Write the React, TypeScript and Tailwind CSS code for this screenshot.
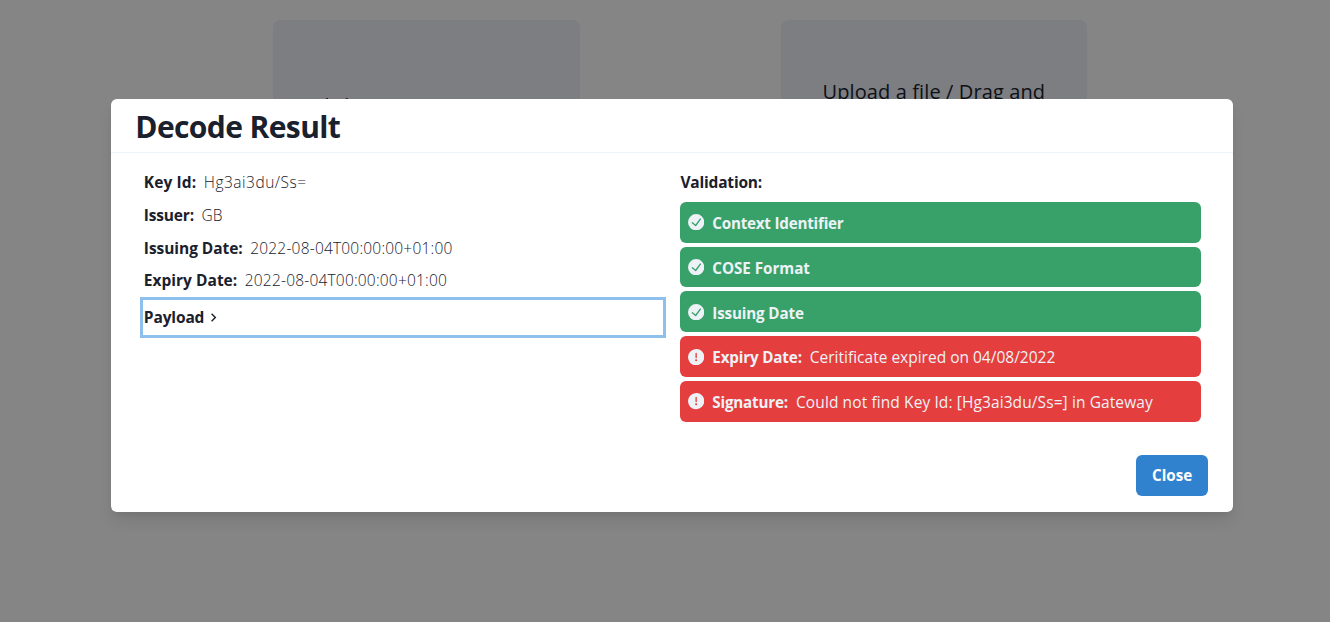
import type { ReactNode } from "react";

function CheckCircle() {
  return (
    <svg viewBox="0 0 24 24" className="size-[16.3px] shrink-0 fill-current">
      <path d="M12,0A12,12,0,1,0,24,12,12.014,12.014,0,0,0,12,0Zm6.927,8.2-6.845,9.289a1.011,1.011,0,0,1-1.43.188L5.764,13.769a1,1,0,1,1,1.25-1.562l4.076,3.261,6.227-8.451A1,1,0,1,1,18.927,8.2Z" />
    </svg>
  );
}

function WarningCircle() {
  return (
    <svg viewBox="0 0 24 24" className="size-[16.3px] shrink-0 fill-current">
      <path d="M11.983,0a12.206,12.206,0,0,0-8.51,3.653A11.8,11.8,0,0,0,0,12.207,11.779,11.779,0,0,0,11.8,24h.214A12.111,12.111,0,0,0,24,11.791h0A11.766,11.766,0,0,0,11.983,0ZM10.5,16.542a1.476,1.476,0,0,1,1.449-1.53h.027a1.527,1.527,0,0,1,1.523,1.47,1.475,1.475,0,0,1-1.449,1.53h-.027A1.529,1.529,0,0,1,10.5,16.542ZM11,12.5v-6a1,1,0,0,1,2,0v6a1,1,0,1,1-2,0Z" />
    </svg>
  );
}

function Field({ label, value, labelClass, valueClass }: { label: string; value: string; labelClass: string; valueClass: string }) {
  return (
    <div className="flex h-[32.7px] items-center gap-[7.5px] pl-[0.8px] leading-6">
      <span className={`font-bold ${labelClass}`}>{label}</span>
      <span className={`font-light ${valueClass}`}>{value}</span>
    </div>
  );
}

function Check({ ok, children }: { ok: boolean; children: ReactNode }) {
  return (
    <div className={`flex h-[40.8px] items-center gap-2 rounded-md px-[7.5px] leading-6 text-[#edf2f7] ${ok ? "bg-[#38a169]" : "bg-[#e53e3e]"}`}>
      {ok ? <CheckCircle /> : <WarningCircle />}
      <div className="flex gap-2 pt-[1.5px]">{children}</div>
    </div>
  );
}

export default function App() {
  return (
    <div className="relative h-[622px] w-[1330px] overflow-hidden bg-[#858585] font-['Open_Sans',sans-serif] text-[15.5px] text-[#1a202c]">
      <div className="flex gap-[201px] pl-[273px] pt-5 text-xl text-[#0d1016]">
        <div className="h-[300px] w-[307px] rounded-lg bg-[#7d7e82] pl-[39px] pt-[72px]">Click</div>
        <div className="h-[300px] w-[306px] rounded-lg bg-[#7d7e82] pl-[41.5px] pt-[58px] tracking-[0.11px]">
          Upload a file / Drag and
        </div>
      </div>

      <div className="absolute inset-0 pl-[111px] pt-[99px]">
        <section className="flex h-[413px] w-[1122px] flex-col rounded-md bg-white shadow-[0_10px_15px_-3px_rgba(0,0,0,0.1),0_4px_6px_-2px_rgba(0,0,0,0.05)]">
          <header className="h-[54px] border-b border-[#edf5fa] pl-[24.3px] pt-[5px] text-[30px] font-bold leading-[46px] tracking-[-0.6px]">
            Decode Result
          </header>
          <div className="flex grow pl-8 pr-[32.3px]">
            <div className="w-[520.4px] pt-[13px]">
              <Field label="Key Id:" value="Hg3ai3du/Ss=" labelClass="tracking-[0.12px]" valueClass="tracking-[0.5px]" />
              <Field label="Issuer:" value="GB" labelClass="tracking-[-0.18px]" valueClass="tracking-[0.1px]" />
              <Field label="Issuing Date:" value="2022-08-04T00:00:00+01:00" labelClass="tracking-[-0.05px]" valueClass="tracking-[0.2px]" />
              <Field label="Expiry Date:" value="2022-08-04T00:00:00+01:00" labelClass="tracking-[0.02px]" valueClass="tracking-[0.2px]" />
              <button className="mt-[3.2px] flex h-[34.8px] w-full items-center pl-[0.8px] font-bold leading-6 shadow-[0_0_0_3px_#8dc0ec]">
                <span className="tracking-[-0.13px]">Payload</span>
                <svg viewBox="0 0 24 24" className="ml-px size-[17px] fill-current">
                  <path d="M10 6L8.59 7.41 13.17 12l-4.58 4.59L10 18l6-6z" />
                </svg>
              </button>
            </div>
            <div className="ml-[17.1px] grow pt-[17px]">
              <div className="font-bold leading-6 tracking-[-0.2px]">Validation:</div>
              <div className="mt-[7.9px] flex flex-col gap-1">
                <Check ok><b className="text-[15.2px] tracking-[-0.22px]">Context Identifier</b></Check>
                <Check ok><b className="text-[15.2px] tracking-[-0.03px]">COSE Format</b></Check>
                <Check ok><b className="text-[15.2px] tracking-[-0.15px]">Issuing Date</b></Check>
                <Check ok={false}>
                  <b className="text-[15.2px] tracking-[-0.15px]">Expiry Date:</b>
                  <span>Ceritificate expired on 04/08/2022</span>
                </Check>
                <Check ok={false}>
                  <b className="text-[15.2px] tracking-[-0.18px]">Signature:</b>
                  <span className="tracking-[0.1px]">Could not find Key Id: [Hg3ai3du/Ss=] in Gateway</span>
                </Check>
              </div>
            </div>
          </div>
          <footer className="flex justify-end pb-4 pr-[24.7px]">
            <button className="h-[41px] w-[72.3px] rounded-md bg-[#3182ce] text-[15.2px] font-bold text-white">Close</button>
          </footer>
        </section>
      </div>
    </div>
  );
}
